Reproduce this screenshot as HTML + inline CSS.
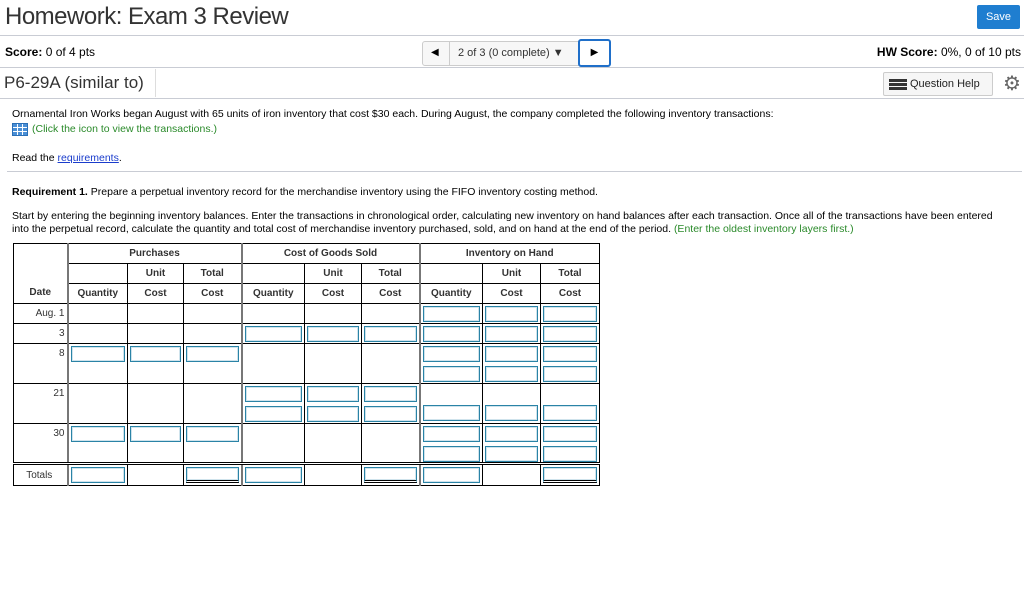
<!DOCTYPE html>
<html><head><meta charset="utf-8"><style>
*{box-sizing:border-box}
body{margin:0;width:1024px;height:613px;background:#fff;font-family:"Liberation Sans",Arial,sans-serif;color:#000;position:relative;overflow:hidden}
.a{position:absolute;white-space:nowrap}
.hl{position:absolute;left:0;width:1024px;height:1px;background:#c9ccd4}
table{position:absolute;left:13px;top:243px;border-collapse:collapse;font-size:10px;table-layout:fixed}
td{border:1px solid #000;padding:0;vertical-align:top;text-align:center;line-height:0;overflow:hidden}
.hd td{font-weight:bold;color:#333;vertical-align:middle;height:20px;line-height:12px}
.in{display:block;height:16px;border:1px solid #2a83a6;box-shadow:inset 0 0 0 1px #cfe3ec;margin:2px 2px 0 2px}
.in+.in{margin-top:4px}
.dt{text-align:right;padding-right:2px;padding-top:2px;color:#333;font-size:10px;line-height:16px !important}
.g{border-left:2px solid #777}
</style></head><body>
<div class="a" style="left:5px;top:3px;font-size:24px;color:#333;letter-spacing:-0.5px">Homework: Exam 3 Review</div>
<div class="a" style="left:977px;top:5px;width:43px;height:24px;background:#1f7ed0;border-radius:2px;color:#fff;font-size:11px;text-align:center;line-height:24px">Save</div>
<div class="hl" style="top:35px"></div>
<div class="a" style="left:5px;top:45px;font-size:12px"><b>Score:</b> 0 of 4 pts</div>
<div class="a" style="left:422px;top:41px;width:188px;height:25px;border:1px solid #ccc;border-radius:3px;background:#f7f7f7"></div>
<div class="a" style="left:449px;top:41px;width:1px;height:25px;background:#ccc"></div>
<div class="a" style="left:431px;top:47px;font-size:10px">&#9664;</div>
<div class="a" style="left:458px;top:47px;font-size:11px;color:#333">2 of 3 (0 complete) &#9660;</div>
<div class="a" style="left:578px;top:39px;width:33px;height:28px;border:2px solid #1f6fc9;border-radius:3px;background:#fff;font-size:10px;text-align:center;line-height:24px">&#9654;</div>
<div class="a" style="right:3px;top:45px;font-size:12px"><b>HW Score:</b> 0%, 0 of 10 pts</div>
<div class="hl" style="top:67px"></div>
<div class="a" style="left:4px;top:73px;font-size:17px;color:#333">P6-29A (similar to)</div>
<div class="a" style="left:155px;top:69px;width:1px;height:28px;background:#ddd"></div>
<div class="a" style="left:883px;top:72px;width:110px;height:24px;border:1px solid #ccc;border-radius:2px;background:#f6f6f6;font-size:11px;line-height:22px;padding-left:26px;color:#222">Question Help</div>
<div class="a" style="left:889px;top:79px;width:18px;height:11px;background:repeating-linear-gradient(#333 0 3px,transparent 3px 4px)"></div>
<div class="a" style="left:1003px;top:71px;font-size:20px;color:#666">&#9881;</div>
<div class="hl" style="top:98px"></div>
<div class="a" style="left:12px;top:108px;font-size:10.5px">Ornamental Iron Works began August with 65 units of iron inventory that cost $30 each. During August, the company completed the following inventory transactions:</div>
<div class="a" style="left:12px;top:123px;width:16px;height:13px;background:#4a8fd6;border:1px solid #2a6fb6;background-image:linear-gradient(90deg,transparent 4px,#fff 4px 5px,transparent 5px 9px,#fff 9px 10px,transparent 10px),linear-gradient(transparent 3px,#fff 3px 4px,transparent 4px 7px,#fff 7px 8px,transparent 8px)"></div>
<div class="a" style="left:32px;top:123px;font-size:10.5px;color:#2a8a2a">(Click the icon to view the transactions.)</div>
<div class="a" style="left:12px;top:152px;font-size:10.5px">Read the <span style="color:#1a3ccc;text-decoration:underline">requirements</span>.</div>
<div class="a" style="left:7px;top:171px;width:1015px;height:1px;background:#c9ccd4"></div>
<div class="a" style="left:12px;top:186px;font-size:10.5px"><b>Requirement 1.</b> Prepare a perpetual inventory record for the merchandise inventory using the FIFO inventory costing method.</div>
<div class="a" style="left:12px;top:210px;font-size:10.5px;line-height:13px">Start by entering the beginning inventory balances. Enter the transactions in chronological order, calculating new inventory on hand balances after each transaction. Once all of the transactions have been entered<br>into the perpetual record, calculate the quantity and total cost of merchandise inventory purchased, sold, and on hand at the end of the period. <span style="color:#2a8a2a">(Enter the oldest inventory layers first.)</span></div>
<table>
<colgroup><col style="width:54px"><col style="width:60px"><col style="width:56px"><col style="width:58px"><col style="width:63px"><col style="width:57px"><col style="width:58px"><col style="width:63px"><col style="width:58px"><col style="width:59px"></colgroup>
<tr class="hd"><td rowspan="3" style="vertical-align:bottom;padding-bottom:4px">Date</td><td colspan="3" class="g">Purchases</td><td colspan="3" class="g">Cost of Goods Sold</td><td colspan="3" class="g">Inventory on Hand</td></tr>
<tr class="hd"><td class="g"></td><td>Unit</td><td>Total</td><td class="g"></td><td>Unit</td><td>Total</td><td class="g"></td><td>Unit</td><td>Total</td></tr>
<tr class="hd"><td class="g">Quantity</td><td>Cost</td><td>Cost</td><td class="g">Quantity</td><td>Cost</td><td>Cost</td><td class="g">Quantity</td><td>Cost</td><td>Cost</td></tr>
<tr><td class="dt" style="height:20px">Aug. 1</td><td class="g"></td><td></td><td></td><td class="g"></td><td></td><td></td><td class="g"><i class="in"></i></td><td><i class="in"></i></td><td><i class="in"></i></td></tr>
<tr><td class="dt" style="height:20px">3</td><td class="g"></td><td></td><td></td><td class="g"><i class="in"></i></td><td><i class="in"></i></td><td><i class="in"></i></td><td class="g"><i class="in"></i></td><td><i class="in"></i></td><td><i class="in"></i></td></tr>
<tr><td class="dt" style="height:40px">8</td><td class="g"><i class="in"></i></td><td><i class="in"></i></td><td><i class="in"></i></td><td class="g"></td><td></td><td></td><td class="g"><i class="in"></i><i class="in"></i></td><td><i class="in"></i><i class="in"></i></td><td><i class="in"></i><i class="in"></i></td></tr>
<tr><td class="dt" style="height:40px">21</td><td class="g"></td><td></td><td></td><td class="g"><i class="in"></i><i class="in"></i></td><td><i class="in"></i><i class="in"></i></td><td><i class="in"></i><i class="in"></i></td><td class="g" style="vertical-align:bottom;padding-bottom:2px"><i class="in"></i></td><td style="vertical-align:bottom;padding-bottom:2px"><i class="in"></i></td><td style="vertical-align:bottom;padding-bottom:2px"><i class="in"></i></td></tr>
<tr style="border-bottom:3px double #000"><td class="dt" style="height:39px">30</td><td class="g"><i class="in"></i></td><td><i class="in"></i></td><td><i class="in"></i></td><td class="g"></td><td></td><td></td><td class="g"><i class="in"></i><i class="in"></i></td><td><i class="in"></i><i class="in"></i></td><td><i class="in"></i><i class="in"></i></td></tr>
<tr><td class="dt" style="height:22px;text-align:center;padding-top:3px">Totals</td><td class="g"><i class="in"></i></td><td></td><td><i class="in" style="border-bottom:3px double #000"></i></td><td class="g"><i class="in"></i></td><td></td><td><i class="in" style="border-bottom:3px double #000"></i></td><td class="g"><i class="in"></i></td><td></td><td><i class="in" style="border-bottom:3px double #000"></i></td></tr>
</table>
</body></html>
